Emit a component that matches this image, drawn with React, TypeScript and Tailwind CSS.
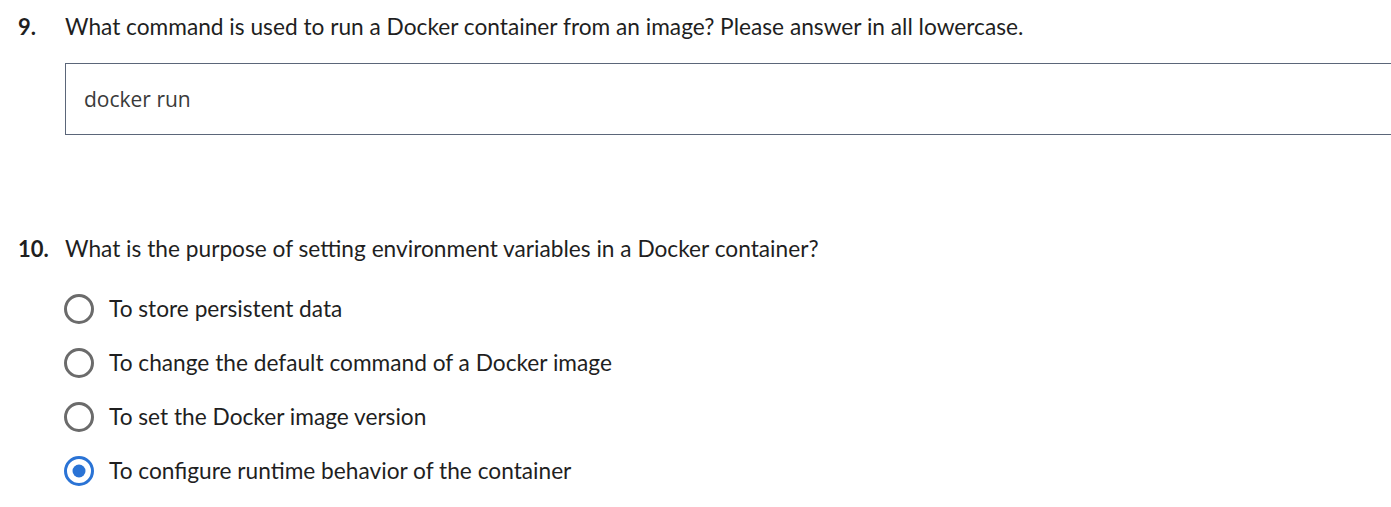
import React from "react";

const options = [
  "To store persistent data",
  "To change the default command of a Docker image",
  "To set the Docker image version",
  "To configure runtime behavior of the container",
];

const Radio: React.FC<{ checked?: boolean }> = ({ checked }) => (
  <svg width="30" height="30" viewBox="0 0 30 30" className="shrink-0">
    <circle
      cx="15"
      cy="15"
      r="13.5"
      fill="white"
      stroke={checked ? "#2a73d5" : "#6b6b6b"}
      strokeWidth="3"
    />
    {checked && <circle cx="15" cy="15" r="6.5" fill="#2a73d5" />}
  </svg>
);

export default function App() {
  return (
    <div
      className="w-[1391px] h-[507px] overflow-hidden bg-white text-[#1f1f1f] text-[22.7px]"
      style={{ fontFamily: "Lato, 'Noto Sans', sans-serif" }}
    >
      {/* Question 9 */}
      <div className="flex pt-[13px] leading-[28px]">
        <div className="w-[65px] pl-[18px] font-bold text-[22px]">9.</div>
        <div>What command is used to run a Docker container from an image? Please answer in all lowercase.</div>
      </div>
      <div className="pl-[65px] mt-[22px]">
        <div className="h-[72px] border border-r-0 border-[#5b6679] flex items-center pl-[18px] pt-[2px] text-[#3a3a3a] font-['Open_Sans',sans-serif] text-[21px]">
          docker run
        </div>
      </div>

      {/* Question 10 */}
      <div className="flex mt-[100px] leading-[28px]">
        <div className="w-[65px] pl-[18px] font-bold text-[22px]">10.</div>
        <div>What is the purpose of setting environment variables in a Docker container?</div>
      </div>
      <div className="mt-[31px] pl-[64px] flex flex-col gap-[24px]">
        {options.map((o, i) => (
          <div key={o} className="flex items-center gap-[15px] h-[30px]">
            <Radio checked={i === 3} />
            <span>{o}</span>
          </div>
        ))}
      </div>
    </div>
  );
}
